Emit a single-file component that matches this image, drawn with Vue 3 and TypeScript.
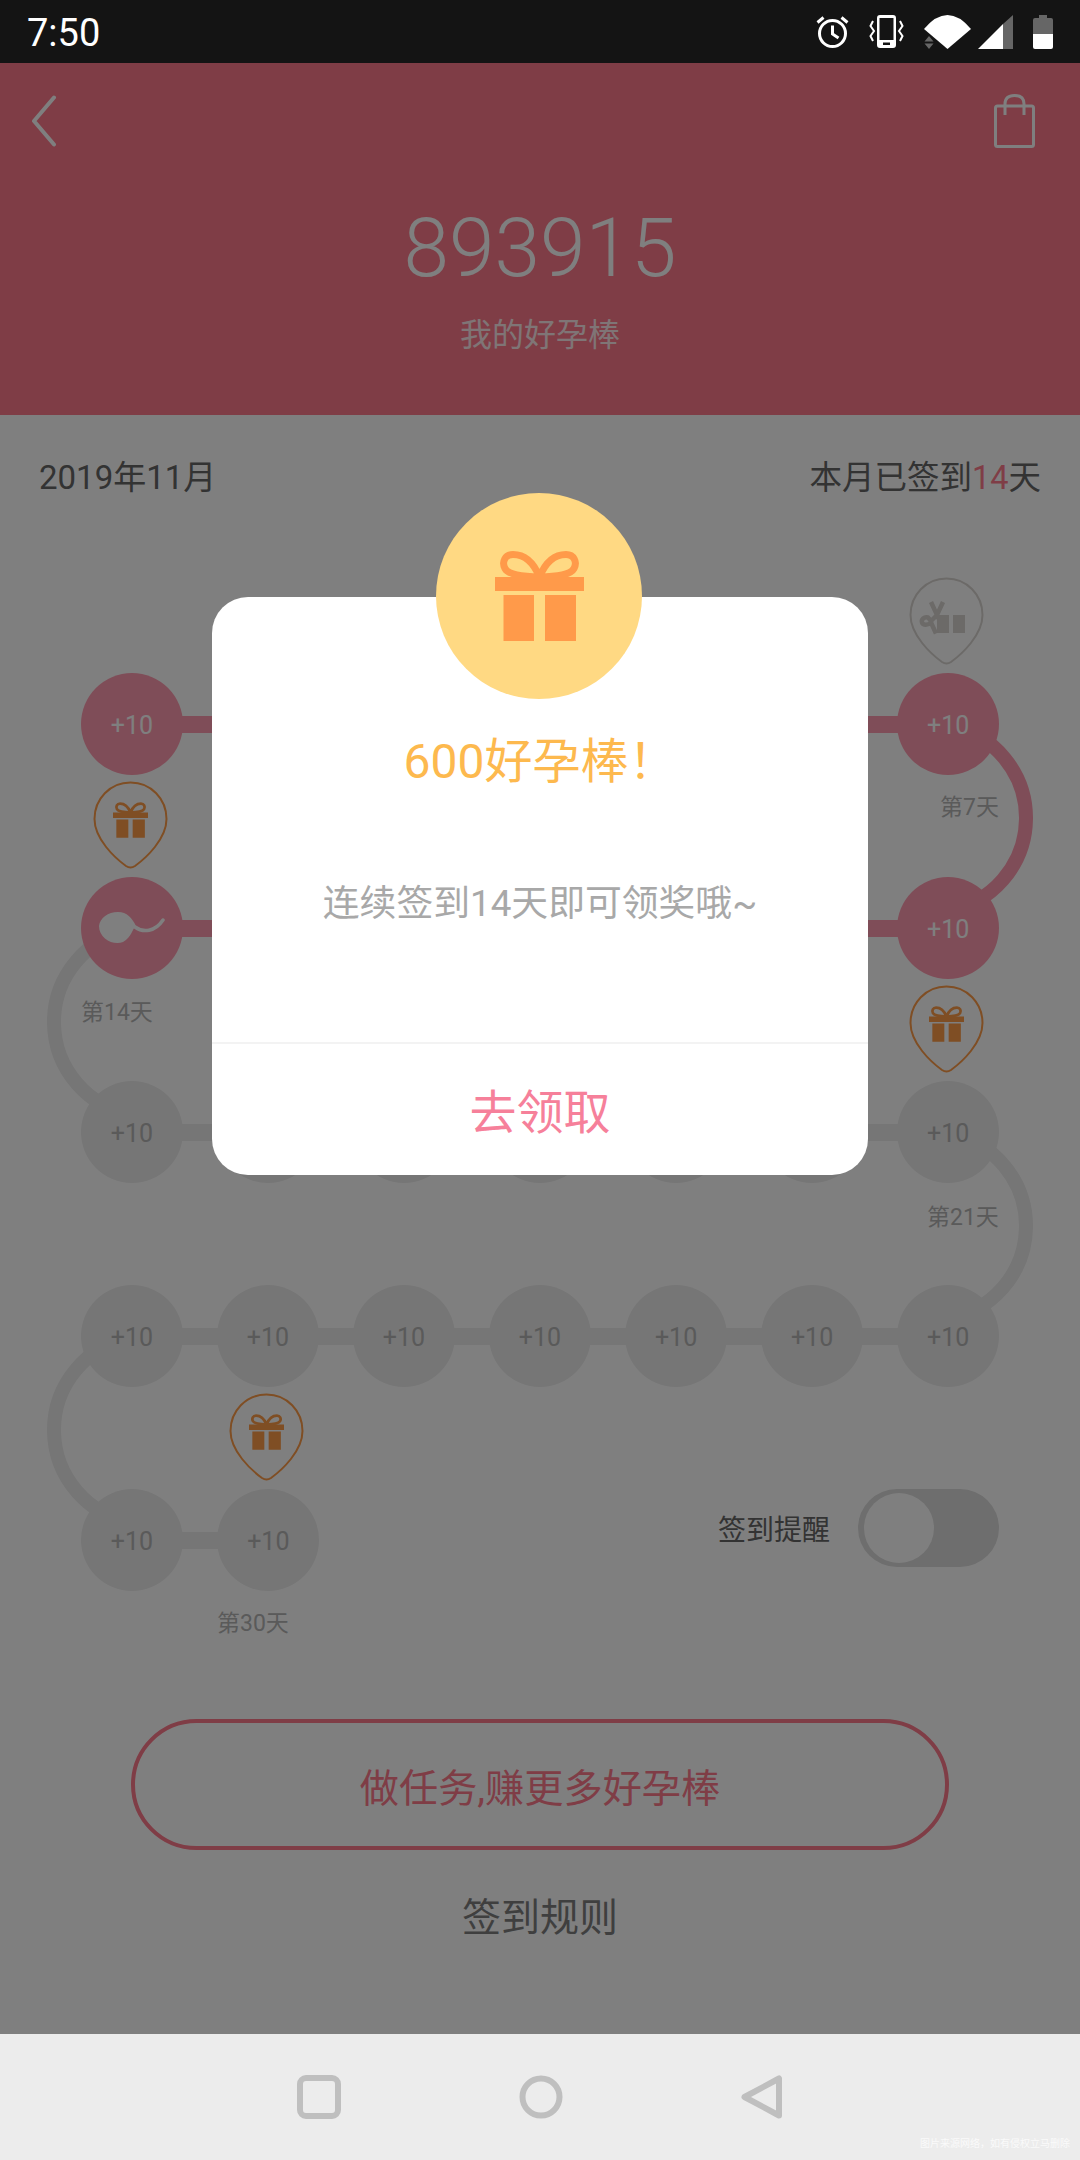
<template>
  <div class="phone">
    <div class="status-bar">
      <span class="clock">7:50</span>
      <div class="status-icons">
        <svg width="33" height="33" viewBox="0 0 33 33" fill="none" stroke="#fff" stroke-width="3">
          <circle cx="16.5" cy="18.5" r="13" />
          <path d="M16.5 10.5v8.5l6 4M1.5 7.5l6-5M31.5 7.5l-6-5" />
        </svg>
        <svg width="35" height="33" viewBox="0 0 35 33">
          <path d="M11 0h13a3 3 0 0 1 3 3v27a3 3 0 0 1-3 3H11a3 3 0 0 1-3-3V3a3 3 0 0 1 3-3zm-.5 3v22h14V3zm3.5 24.500v2.500h7v-2.500z" fill="#fff" fill-rule="evenodd" />
          <path d="M4 6L1.500 11l3.500 5-3.500 5 2.500 5M31 6l2.500 5-3.500 5 3.500 5-2.500 5" fill="none" stroke="#fff" stroke-width="2" />
        </svg>
        <svg width="47" height="34" viewBox="0 0 47 34">
          <path d="M0 14Q23.500-14 47 14L23.500 34z" fill="#fff" />
          <path d="M5 21l4.500 5.500h-9zM5 34l-4.500-5.500h9z" fill="#666" />
        </svg>
        <svg class="signal" width="35" height="34" viewBox="0 0 35 34">
          <path d="M0 34L25 9v25z" fill="#fff" />
          <path d="M25 9l10-9v34H25z" fill="#666" />
        </svg>
        <svg width="20" height="34" viewBox="0 0 20 34">
          <path d="M6 0h8v3h4a2 2 0 0 1 2 2v14H0V5a2 2 0 0 1 2-2h4z" fill="#666" />
          <path d="M0 19h20v13a2 2 0 0 1-2 2H2a2 2 0 0 1-2-2z" fill="#fff" />
        </svg>
      </div>
    </div>

    <div class="content">
      <svg class="defs" width="0" height="0">
        <symbol id="gift" viewBox="0 0 89 90">
          <path d="M44.500 26C38 10 28 3.500 18 3.500 10 3.500 6.500 11 10 17.500 13 23 24 25.500 44.500 26ZM44.500 26C51 10 61 3.500 71 3.500 79 3.500 82.500 11 79 17.500 76 23 65 25.500 44.500 26Z" fill="none" stroke="currentColor" stroke-width="7" />
          <path d="M0 26h89v14H0zM8.500 44H39v46H8.500zM50 44h31v46H50z" fill="currentColor" />
        </symbol>
      </svg>

      <header class="top">
        <div class="top-icons">
          <svg width="26" height="52" viewBox="0 0 26 52" fill="none" stroke="#fff" stroke-width="4" stroke-linecap="round" stroke-linejoin="round">
            <path d="M23 2.500L3 26l20 23.500" />
          </svg>
          <svg width="41" height="54" viewBox="0 0 41 54" fill="none" stroke="#fff" stroke-width="3">
            <rect x="1.500" y="12" width="38" height="40.500" rx="2" />
            <path d="M11 21V10c0-6 4-8.500 9.500-8.500S30 4 30 10v11" />
          </svg>
        </div>
        <div class="score">893915</div>
        <div class="score-label">我的好孕棒</div>
      </header>

      <div class="month-row">
        <span>2019年11月</span>
        <span class="signed">本月已签到<em>14</em>天</span>
      </div>

      <div class="track">
        <svg class="arcs" width="1080" height="918" viewBox="0 0 1080 918" fill="none" stroke-width="14">
          <path v-for="arc in arcs" :key="arc.d" :d="arc.d" :stroke="arc.color" />
        </svg>

        <div v-for="(row, r) in rows" :key="r" class="row">
          <div
            v-for="(node, n) in row.nodes"
            :key="n"
            class="node"
            :class="{ on: row.on, linked: n < row.nodes.length - 1 }"
          >
            <svg v-if="node === 'seed'" width="66" height="33" viewBox="0 0 66 33">
              <path d="M0 14C1 6 9 0 19 0c9 0 14 6 18 14-4 3-4 11-13 16C15 34 0 27 0 14z" fill="#fff" />
              <path d="M36 15c8 6 20 5 28-7" fill="none" stroke="#fff" stroke-width="3.500" stroke-linecap="round" />
            </svg>
            <span v-else class="points">{{ node }}</span>
          </div>
          <div v-if="r === rows.length - 1" class="remind">
            <span>签到提醒</span>
            <div class="switch"><i /></div>
          </div>
        </div>

        <div v-for="pin in pins" :key="pin.cls" class="pin" :class="pin.cls">
          <svg width="75" height="88" viewBox="0 0 75 88" fill="none">
            <path
              d="M37.500 1.500C17 1.500 1.500 18 1.500 38 1.500 58 22 77 33 85c3 2 6 2 9 0C53 77 73.500 58 73.500 38 73.500 18 58 1.500 37.500 1.500z"
              stroke="currentColor"
              stroke-width="2"
            />
            <g v-if="pin.open">
              <path d="M28 38h12v18H28zM44 38h12v18H44z" fill="currentColor" />
              <path d="M22 25l6 13 6-13M28 38l-6 6-3-3.500c-4-1-7 2-6 5 1 3 6 3 9 0l5 11" stroke="currentColor" stroke-width="4.500" />
            </g>
            <use v-else href="#gift" x="20" y="21" width="35" height="36" fill="currentColor" />
          </svg>
        </div>

        <span class="day day-7">第7天</span>
        <span class="day day-14">第14天</span>
        <span class="day day-21">第21天</span>
        <span class="day day-30">第30天</span>
      </div>

      <button class="task-btn">做任务,赚更多好孕棒</button>
      <div class="rules">签到规则</div>

      <div class="mask">
        <div class="dialog">
          <div class="badge">
            <svg width="89" height="90" viewBox="0 0 89 90"><use href="#gift" /></svg>
          </div>
          <div class="dialog-title">600好孕棒！</div>
          <div class="dialog-text">连续签到14天即可领奖哦~</div>
          <div class="dialog-action">去领取</div>
        </div>
      </div>
    </div>

    <div class="nav-bar">
      <svg width="44" height="44" viewBox="0 0 44 44" fill="none" stroke="#bfbfbf" stroke-width="6">
        <rect x="3" y="3" width="38" height="38" rx="6" />
      </svg>
      <svg width="44" height="44" viewBox="0 0 44 44" fill="none" stroke="#bfbfbf" stroke-width="6">
        <circle cx="22" cy="22" r="18.500" />
      </svg>
      <svg width="42" height="44" viewBox="0 0 42 44" fill="none" stroke="#bfbfbf" stroke-width="6" stroke-linejoin="round">
        <path d="M38 3.500v37L3.500 22z" />
      </svg>
      <span class="watermark">图片来源网络，如有侵权立马删除</span>
    </div>
  </div>
</template>

<script setup lang="ts">
const PINK = '#ff9bb0'
const GREY = '#ececec'

// the middle five of the upper rows sit behind the dialog
const edges = (first: string): string[] => [first, '', '', '', '', '', '+10']
const plain = (count: number): string[] => Array(count).fill('+10')

const rows = [
  { on: true, nodes: edges('+10') },
  { on: true, nodes: edges('seed') },
  { on: false, nodes: edges('+10') },
  { on: false, nodes: plain(7) },
  { on: false, nodes: plain(2) }
]

// ring joining one row to the next, mid is the y halfway between both rows
function ring(side: 'left' | 'right', mid: number, color: string) {
  const right = side === 'right'
  const x = right ? 949 : 131
  const cx = right ? 932 : 148
  const cy = mid - 8
  const r = 94
  const onRing = (y: number) => {
    const len = Math.hypot(x - cx, y - cy)
    return `${cx + ((x - cx) * r) / len} ${cy + ((y - cy) * r) / len}`
  }
  return { color, d: `M${onRing(mid - 102)}A${r} ${r} 0 0 ${right ? 1 : 0} ${onRing(mid + 102)}` }
}

const arcs = [
  ring('right', 153, PINK),
  ring('left', 357, GREY),
  ring('right', 561, GREY),
  ring('left', 765, GREY)
]

const pins = [
  { cls: 'pin-day7', open: true },
  { cls: 'pin-day14', open: false },
  { cls: 'pin-day8', open: false },
  { cls: 'pin-day23', open: false }
]
</script>

<style scoped>
.phone {
  width: 1080px;
  height: 2160px;
  display: flex;
  flex-direction: column;
  overflow: hidden;
  font-family: Roboto, "Noto Sans CJK SC", sans-serif;
}

.status-bar {
  height: 63px;
  flex: none;
  display: flex;
  align-items: center;
  justify-content: space-between;
  padding: 0 27px;
  background: #141414;
  color: #fff;
}

.clock {
  font-size: 38px;
  padding-top: 2px;
}

.status-icons {
  display: flex;
  align-items: center;
  gap: 20px;
}

.signal {
  margin-left: -13px;
}

.defs {
  position: absolute;
}

.content {
  flex: 1;
  position: relative;
  background: #fff;
}

.top {
  height: 352px;
  background: #ff7a8c;
  color: #fff;
  text-align: center;
}

.top-icons {
  display: flex;
  justify-content: space-between;
  align-items: center;
  padding: 31px 45px 0 31px;
}

.score {
  margin-top: 53px;
  font-size: 82px;
  font-weight: 300;
  line-height: 94px;
}

.score-label {
  margin-top: 18px;
  font-size: 32px;
  line-height: 44px;
  opacity: 0.85;
}

.month-row {
  display: flex;
  justify-content: space-between;
  margin-top: 38px;
  padding: 0 39px;
  font-size: 33px;
  line-height: 50px;
  color: #666;
}

.signed {
  font-size: 32.5px;
}

.month-row em {
  font-style: normal;
  color: #ff7a8c;
}

.track {
  position: relative;
  isolation: isolate;
  display: flex;
  flex-direction: column;
  gap: 102px;
  margin-top: 170px;
  padding: 0 81px;
}

.arcs {
  position: absolute;
  top: 0;
  left: 0;
}

.row {
  display: flex;
  gap: 34.33px;
}

.node {
  position: relative;
  width: 102px;
  height: 102px;
  display: flex;
  align-items: center;
  justify-content: center;
  border-radius: 50%;
  background: #ececec;
  color: #b4b4b4;
  font-size: 25px;
}

.points {
  padding-top: 2px;
}

.node.linked::after {
  content: "";
  position: absolute;
  left: 98px;
  top: 43px;
  width: 42px;
  height: 17px;
  background: inherit;
  z-index: -1;
}

.node.on {
  background: #ff9bb0;
  color: #fff;
}

.remind {
  margin-left: auto;
  align-self: flex-start;
  display: flex;
  align-items: center;
  gap: 28px;
  font-size: 28px;
  color: #666;
}

.switch {
  width: 141px;
  height: 78px;
  border-radius: 39px;
  padding: 4px 6px;
  box-sizing: border-box;
  background: #dcdcdc;
}

.switch i {
  display: block;
  width: 70px;
  height: 70px;
  border-radius: 50%;
  background: #fff;
}

.pin {
  position: absolute;
  width: 75px;
  height: 88px;
  color: #ff9c48;
}

.pin-day7 {
  left: 909px;
  top: -96px;
  color: #d8d4d0;
}

.pin-day14 {
  left: 93px;
  top: 108px;
}

.pin-day8 {
  left: 909px;
  top: 312px;
}

.pin-day23 {
  left: 229px;
  top: 720px;
}

.day {
  position: absolute;
  font-size: 23px;
  line-height: 30px;
  color: #b4b4b4;
}

.day-7 {
  left: 940px;
  top: 120px;
}

.day-14 {
  left: 81px;
  top: 325px;
}

.day-21 {
  left: 927px;
  top: 530px;
}

.day-30 {
  left: 217px;
  top: 936px;
}

.task-btn {
  display: block;
  width: 818px;
  height: 131px;
  margin: 128px 0 0 131px;
  border: 4px solid #ff7a8c;
  border-radius: 66px;
  background: transparent;
  font-family: inherit;
  font-size: 39.2px;
  color: #ff7a8c;
}

.rules {
  margin-top: 43px;
  text-align: center;
  font-size: 39px;
  line-height: 50px;
  color: #7f7f7f;
}

.mask {
  position: absolute;
  inset: 0;
  z-index: 1;
  display: flex;
  justify-content: center;
  padding-top: 534px;
  background: rgba(0, 0, 0, 0.5);
}

.dialog {
  position: relative;
  width: 656px;
  height: 578px;
  display: flex;
  flex-direction: column;
  align-items: center;
  border-radius: 36px;
  background: #fff;
}

.badge {
  position: absolute;
  top: -104px;
  left: 224px;
  width: 206px;
  height: 206px;
  display: flex;
  align-items: center;
  justify-content: center;
  border-radius: 50%;
  background: #ffd983;
  color: #ff9a4a;
}

.dialog-title {
  margin-top: 133px;
  font-size: 48px;
  line-height: 64px;
  color: #fdb94e;
}

.dialog-text {
  margin-top: 85px;
  font-size: 36.8px;
  line-height: 50px;
  color: #a8a8a8;
}

.dialog-action {
  margin-top: auto;
  width: 100%;
  height: 133px;
  padding-bottom: 2px;
  border-top: 2px solid #f3f3f3;
  box-sizing: border-box;
  display: flex;
  align-items: center;
  justify-content: center;
  font-size: 47px;
  color: #f6809a;
}

.nav-bar {
  position: relative;
  height: 126px;
  flex: none;
  display: flex;
  align-items: center;
  justify-content: center;
  gap: 178px;
  background: #ececec;
}

.watermark {
  position: absolute;
  right: 10px;
  bottom: 9px;
  font-size: 10px;
  line-height: 14px;
  color: #fafafa;
}
</style>
